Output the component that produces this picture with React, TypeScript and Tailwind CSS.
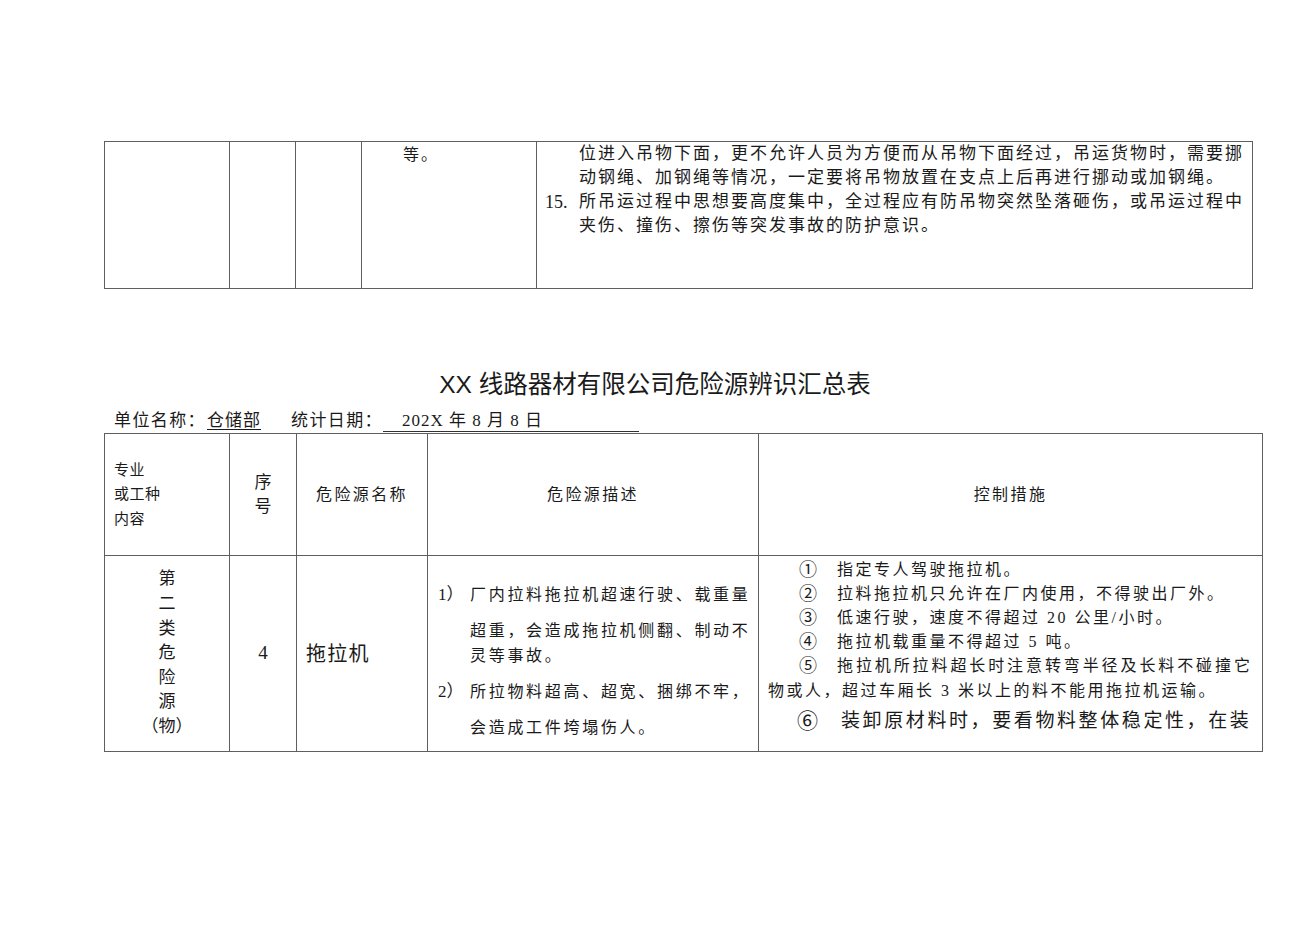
import React from "react";

const SERIF = "font-['Liberation_Serif','Noto_Sans_CJK_SC',serif]";
const SANS = "font-['Liberation_Sans','Noto_Sans_CJK_SC',sans-serif]";

const cell = "border border-[#5f5f5f] p-0";

const TopTable: React.FC = () => (
  <table className="table-fixed border-collapse w-[1148px]">
    <colgroup>
      <col className="w-[125px]" />
      <col className="w-[66px]" />
      <col className="w-[66px]" />
      <col className="w-[175px]" />
      <col className="w-[716px]" />
    </colgroup>
    <tbody>
      <tr className="h-[147px]">
        <td className={cell} />
        <td className={cell} />
        <td className={cell} />
        <td className={`${cell} align-top`}>
          <div className="pl-[41px] pt-[1px] text-[16px] leading-[24px] tracking-[2px]">
            等。
          </div>
        </td>
        <td className={`${cell} align-top`}>
          <div className="text-[17px] leading-[24px] tracking-[2px] whitespace-nowrap">
            <div className="pl-[42px]">
              位进入吊物下面，更不允许人员为方便而从吊物下面经过，吊运货物时，需要挪
            </div>
            <div className="pl-[42px]">
              动钢绳、加钢绳等情况，一定要将吊物放置在支点上后再进行挪动或加钢绳。
            </div>
            <div className="flex pl-[8px]">
              <span className="w-[34px] tracking-normal text-[18px]">15.</span>
              <span>所吊运过程中思想要高度集中，全过程应有防吊物突然坠落砸伤，或吊运过程中</span>
            </div>
            <div className="pl-[42px]">夹伤、撞伤、擦伤等突发事故的防护意识。</div>
          </div>
        </td>
      </tr>
    </tbody>
  </table>
);

const MEASURES = [
  "指定专人驾驶拖拉机。",
  "拉料拖拉机只允许在厂内使用，不得驶出厂外。",
  "低速行驶，速度不得超过 20 公里/小时。",
  "拖拉机载重量不得超过 5 吨。",
];
const CIRCLES = ["①", "②", "③", "④"];

const SummaryTable: React.FC = () => (
  <table className="table-fixed border-collapse w-[1158px]">
    <colgroup>
      <col className="w-[125px]" />
      <col className="w-[67px]" />
      <col className="w-[131px]" />
      <col className="w-[331px]" />
      <col className="w-[504px]" />
    </colgroup>
    <tbody>
      <tr className="h-[122px]">
        <td className={`${cell} align-middle`}>
          <div className="pl-[9px] text-[15px] leading-[24.5px] tracking-[0.5px]">
            <div>专业</div>
            <div>或工种</div>
            <div>内容</div>
          </div>
        </td>
        <td className={`${cell} align-middle text-center`}>
          <div className="text-[17px] leading-[24px]">
            <div>序</div>
            <div>号</div>
          </div>
        </td>
        <td className={`${cell} align-middle text-center`}>
          <span className="text-[16px] tracking-[2.4px]">危险源名称</span>
        </td>
        <td className={`${cell} align-middle text-center`}>
          <span className="text-[16px] tracking-[2.4px]">危险源描述</span>
        </td>
        <td className={`${cell} align-middle text-center`}>
          <span className="text-[16px] tracking-[2.4px]">控制措施</span>
        </td>
      </tr>
      <tr className="h-[196px]">
        <td className={`${cell} align-middle text-center`}>
          <div className="text-[17px] leading-[24.6px]">
            {["第", "二", "类", "危", "险", "源", "（物）"].map((c) => (
              <div key={c}>{c}</div>
            ))}
          </div>
        </td>
        <td className={`${cell} align-middle text-center`}>
          <span className="text-[19px]">4</span>
        </td>
        <td className={`${cell} align-middle`}>
          <span className="pl-[9px] text-[20px] tracking-[1.3px]">拖拉机</span>
        </td>
        <td className={`${cell} align-top`}>
          <div className="pt-[27px] pl-[10px] text-[16px] leading-[24px] tracking-[2.7px] whitespace-nowrap">
            <div className="flex">
              <span className="w-[32px] tracking-normal text-[17px]">1）</span>
              <span>厂内拉料拖拉机超速行驶、载重量</span>
            </div>
            <div className="pl-[32px] mt-[12px]">超重，会造成拖拉机侧翻、制动不</div>
            <div className="pl-[32px] mt-[1px]">灵等事故。</div>
            <div className="flex mt-[12px]">
              <span className="w-[32px] tracking-normal text-[17px]">2）</span>
              <span>所拉物料超高、超宽、捆绑不牢，</span>
            </div>
            <div className="pl-[32px] mt-[12px]">会造成工件垮塌伤人。</div>
          </div>
        </td>
        <td className={`${cell} align-top`}>
          <div className="pt-[2px] pl-[9px] text-[16px] leading-[24px] tracking-[2.5px] whitespace-nowrap">
            {MEASURES.map((m, i) => (
              <div key={m} className="flex pl-[31px]">
                <span className="w-[38px] tracking-normal text-[18px]">{CIRCLES[i]}</span>
                <span>{m}</span>
              </div>
            ))}
            <div className="flex pl-[31px]">
              <span className="w-[38px] tracking-normal text-[18px]">⑤</span>
              <span className="tracking-[2.9px]">拖拉机所拉料超长时注意转弯半径及长料不碰撞它</span>
            </div>
            <div className="leading-[26px]">物或人，超过车厢长 3 米以上的料不能用拖拉机运输。</div>
            <div className="flex pl-[29px] text-[19px] leading-[34px] tracking-[2.6px]">
              <span className="w-[44px] tracking-normal text-[21px]">⑥</span>
              <span>装卸原材料时，要看物料整体稳定性，在装</span>
            </div>
          </div>
        </td>
      </tr>
    </tbody>
  </table>
);

export default function App() {
  return (
    <div className={`w-[1310px] h-[926px] bg-white text-[#1a1a1a] ${SERIF}`}>
      <div className="pt-[141px] pl-[104px]">
        <TopTable />
      </div>
      <h1 className={`mt-[81px] text-center text-[24.5px] leading-[30px] ${SANS} font-normal`}>
        XX 线路器材有限公司危险源辨识汇总表
      </h1>
      <div className="mt-[10px] pl-[114px] flex items-end text-[17px] leading-[22px] whitespace-nowrap">
        <span className="tracking-[1.4px]">单位名称：</span>
        <span className="ml-[1px] underline underline-offset-[3px] tracking-[1px]">仓储部</span>
        <span className="ml-[30px] tracking-[1.4px]">统计日期：</span>
        <span className="ml-[0px] w-[256px] border-b border-[#333] pl-[19px] h-[22px] tracking-[1px]">
          202X 年 8 月 8 日
        </span>
      </div>
      <div className="pl-[104px] mt-[1px]">
        <SummaryTable />
      </div>
    </div>
  );
}
